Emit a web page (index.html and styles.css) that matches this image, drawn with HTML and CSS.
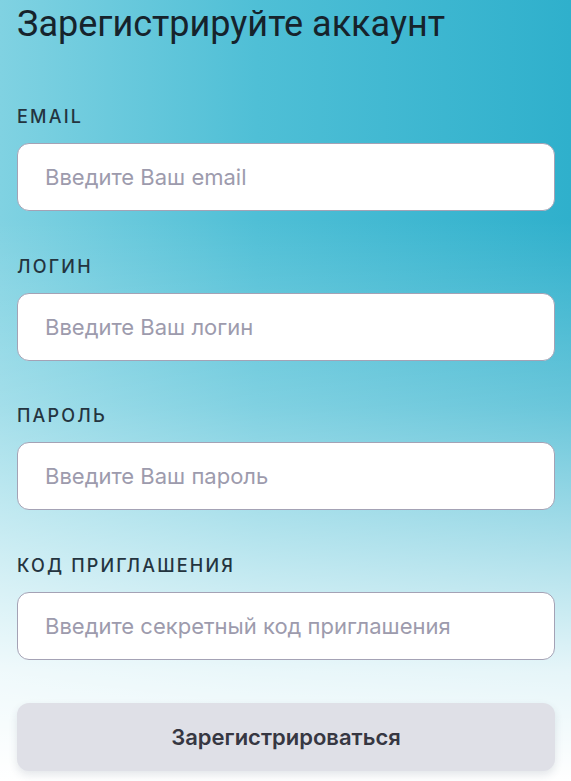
FILE: index.html
```html
<!DOCTYPE html>
<html lang="ru">
<head>
<meta charset="utf-8">
<title>Регистрация</title>
<link rel="stylesheet" href="styles.css">
</head>
<body>
<main class="page">
  <h1 class="title">Зарегистрируйте аккаунт</h1>
  <form class="form">
    <div class="field">
      <label class="label" for="email">EMAIL</label>
      <input class="input" id="email" type="text" placeholder="Введите Ваш email">
    </div>
    <div class="field">
      <label class="label" for="login">ЛОГИН</label>
      <input class="input" id="login" type="text" placeholder="Введите Ваш логин">
    </div>
    <div class="field">
      <label class="label" for="password">ПАРОЛЬ</label>
      <input class="input" id="password" type="text" placeholder="Введите Ваш пароль">
    </div>
    <div class="field">
      <label class="label" for="code">КОД ПРИГЛАШЕНИЯ</label>
      <input class="input" id="code" type="text" placeholder="Введите секретный код приглашения">
    </div>
    <button class="button" type="button">Зарегистрироваться</button>
  </form>
</main>
</body>
</html>
```

FILE: styles.css
```css
html, body {
  margin: 0;
  padding: 0;
  height: 100%;
}

body {
  background:
    linear-gradient(to bottom, rgba(255,255,255,0) 28%, rgba(255,255,255,0.28) 52%, rgba(255,255,255,0.88) 86%, #ffffff 100%),
    linear-gradient(to right, #80d2e2 0%, #4fbfd6 45%, #2fb0cc 100%);
  font-family: "Inter", "Noto Sans", sans-serif;
  overflow: hidden;
}

.page {
  padding: 0 16px 0 17px;
}

.title {
  margin: 0;
  padding-top: 4px;
  font-family: "Roboto", "Noto Sans", sans-serif;
  font-weight: 400;
  font-size: 36px;
  line-height: 40px;
  color: #16232c;
}

.form {
  display: flex;
  flex-direction: column;
  gap: 45.5px;
  margin-top: 63px;
}

.field {
  display: flex;
  flex-direction: column;
  gap: 16px;
}

.label {
  font-size: 18px;
  line-height: 20px;
  letter-spacing: 2.2px;
  font-weight: 500;
  color: #24343f;
}

.input {
  box-sizing: border-box;
  height: 68px;
  width: 100%;
  margin: 0;
  padding: 0 20px 0 27px;
  border: 1px solid #a4a2b5;
  border-radius: 12px;
  background: #ffffff;
  font-family: "Inter", "Noto Sans", sans-serif;
  font-size: 22px;
  color: #333;
  outline: none;
}

.input::placeholder {
  color: #9d9bad;
  opacity: 1;
}

.button {
  box-sizing: border-box;
  height: 68px;
  width: 100%;
  margin-top: -2.5px;
  border: none;
  border-radius: 12px;
  background: #dfe0e7;
  box-shadow: 0 4px 8px rgba(40, 60, 80, 0.12);
  font-family: "Inter", "Noto Sans", sans-serif;
  font-size: 22px;
  font-weight: 600;
  color: #363742;
  cursor: pointer;
}
```
